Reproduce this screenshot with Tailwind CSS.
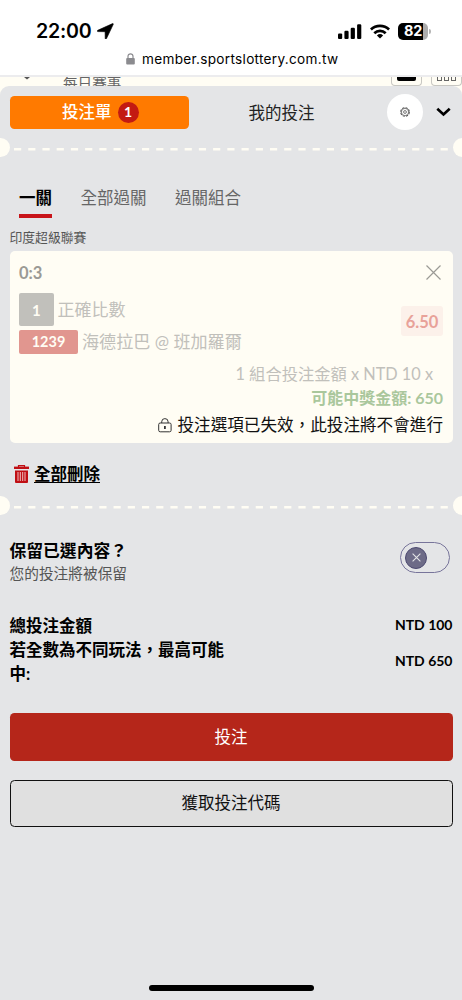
<!DOCTYPE html>
<html lang="zh-TW">
<head>
<meta charset="utf-8">
<meta name="viewport" content="width=device-width, initial-scale=1">
<title>投注單</title>
<script src="https://cdn.jsdelivr.net/npm/@tailwindcss/browser@4"></script>
</head>
<body class="h-[1000px] w-[462px] overflow-hidden bg-[#fffdf4] font-['Lato','Noto_Sans_CJK_TC',sans-serif] text-[16.5px] leading-6 text-[#111]">
<div class="flex h-[1000px] flex-col overflow-hidden">

  <!-- Status bar and address -->
  <header class="flex h-[77px] shrink-0 flex-col border-b-2 border-[#ececee] bg-white font-['Inter','Noto_Sans_CJK_TC',sans-serif] text-black">
    <div class="flex h-[46px] items-end pr-[31px] pl-[36px]">
      <div class="flex h-[30px] items-center gap-[5px]">
        <span class="text-[19.6px] font-semibold tracking-[-0.2px]">22:00</span>
        <svg class="h-4 w-[17px]" viewBox="0 0 17 16"><path d="M15.600.6.7 7.300c-.6.3-.5 1.300.2 1.300l7.200.1.100 6.700c0 .8 1 .9 1.300.2L16.300 1.200c.2-.4-.3-.8-.7-.6Z" fill="#000" stroke="#000" stroke-width=".6"/></svg>
      </div>
      <div class="ml-auto flex h-[30px] items-center gap-[8px]">
        <svg class="h-[15px] w-6" viewBox="0 0 24 15"><rect x="0" y="9.4" width="4.2" height="5.6" rx="1.1"/><rect x="6.4" y="6.8" width="4.2" height="8.2" rx="1.1"/><rect x="12.7" y="3.8" width="4.2" height="11.2" rx="1.1"/><rect x="19.1" y="0.3" width="4.2" height="14.7" rx="1.1"/></svg>
        <svg class="h-[15px] w-5" viewBox="0 0 20 15"><g fill="none" stroke="#000" stroke-width="2.7"><path d="M.9 5.500a13 13 0 0 1 18.200 0"/><path d="M4.300 9.200a8.200 8.200 0 0 1 11.400 0"/></g><path d="M10 14.600 6.900 11.500a4.500 4.500 0 0 1 6.200 0Z"/></svg>
        <div class="flex items-center gap-[1px]">
          <div class="flex h-[17px] w-[30px] items-center justify-center rounded-[5px] bg-linear-to-r from-black from-82% to-[#adadad] to-82% text-[14.5px] font-bold tracking-[-0.2px] text-white">82</div>
          <div class="h-[5px] w-[2px] rounded-r-full bg-[#b5b5b5]"></div>
        </div>
      </div>
    </div>
    <div class="flex h-[25px] items-center gap-[7px] pl-[126px]">
      <svg class="h-3 w-[9px]" viewBox="0 0 9 12"><rect x="0.2" y="5" width="8.600" height="6.600" rx="1" fill="#8b8b8f"/><path d="M2 5.500V3.300a2.500 2.500 0 0 1 5 0v2.200" fill="none" stroke="#8b8b8f" stroke-width="1.200"/></svg>
      <span class="text-[13.6px] tracking-[0.3px]">member.sportslottery.com.tw</span>
    </div>
  </header>

  <!-- Page strip behind the sheet -->
  <div class="flex h-[9px] shrink-0 items-start overflow-hidden pl-[24px]">
    <svg class="h-[3px] w-[6px]" viewBox="0 0 6 3"><path d="M0 0h6L3 2.600Z" fill="#555"/></svg>
    <span class="-mt-[5px] ml-[33px] text-[14.600px] leading-6 text-[#666]">每日賽事</span>
    <div class="mr-[9px] ml-auto flex h-[9px] w-[31px] justify-center rounded-b-[4px] border border-t-0 border-[#c8c7c2]"><div class="h-1 w-[19px] rounded-b-[2px] bg-black"></div></div>
    <div class="flex h-[9px] w-[31px] justify-center gap-[2px] rounded-b-[4px] border border-t-0 border-[#c8c7c2]">
      <i class="h-1 w-[5px] border border-t-0 border-[#666]"></i><i class="h-1 w-[5px] border border-t-0 border-[#666]"></i><i class="h-1 w-[5px] border border-t-0 border-[#666]"></i>
    </div>
  </div>

  <!-- Bet slip sheet -->
  <main class="flex h-[914px] shrink-0 flex-col overflow-hidden rounded-t-[9px] bg-[#e4e5e7]">
    <div class="flex h-[52px] shrink-0 items-center pl-[9.500px]">
      <div class="flex h-[33px] w-[179.500px] items-center justify-center gap-[6px] rounded-[4.500px] bg-[#ff7a00] pl-[2px] font-medium text-white">
        <span>投注單</span>
        <span class="flex size-[21px] items-center justify-center rounded-full bg-[#c31a12] text-[14px] font-bold">1</span>
      </div>
      <span class="ml-[59.500px] pt-px text-[#222]">我的投注</span>
      <div class="ml-[72px] flex size-9 items-center justify-center rounded-full bg-white">
        <svg class="size-[10px]" viewBox="0 0 20 20" fill="none" stroke="#555"><circle cx="10" cy="10" r="8.600" stroke-width="2.200" stroke-dasharray="4.500 2.250"/><circle cx="10" cy="10" r="7.200" stroke-width="1.400"/><circle cx="10" cy="10" r="2.800" stroke-width="1.600"/></svg>
      </div>
      <svg class="ml-[13px] h-[10px] w-[15px]" viewBox="0 0 15 10"><path d="m1.300 1.800 6.200 5.700 6.200-5.700" fill="none" stroke="#000" stroke-width="2.700"/></svg>
    </div>
    <div class="-mx-[9.500px] flex h-[19px] shrink-0 items-center">
      <div class="size-[19px] rounded-full bg-[#fffdf4]"></div>
      <svg class="mx-auto mt-[2px] h-[4px] w-[434px]" viewBox="0 0 434 4"><path d="M0 2.200h434" stroke="#fffdf4" stroke-width="2.600" stroke-dasharray="7.200 7.020"/></svg>
      <div class="size-[19px] rounded-full bg-[#fffdf4]"></div>
    </div>

    <nav class="mt-[29px] flex h-[32px] shrink-0 gap-[28.500px] pl-[19px] text-[#666]">
      <span class="flex flex-col border-b-4 border-[#c8141a] font-bold text-black">一關</span>
      <span>全部過關</span>
      <span>過關組合</span>
    </nav>
    <div class="mt-[7px] h-[26px] shrink-0 pl-[9.500px] text-[12.800px] text-[#555]">印度超級聯賽</div>

    <section class="mx-[9.500px] flex h-[192px] shrink-0 flex-col rounded-[5px] bg-[#fffdf4] px-[9.500px] text-[#c1c0bb]">
      <div class="flex h-[42px] items-center justify-between font-bold text-[#9b9a95]">
        <span class="pt-[2px]">0:3</span>
        <svg class="mr-[2px] h-[15px] w-[15px]" viewBox="0 0 15 15"><path d="m.5.500 14 14m0-14-14 14" stroke="#9b9a95" stroke-width="1.200"/></svg>
      </div>
      <div class="flex h-[61px] items-start justify-between">
        <div class="flex flex-col gap-[4px]">
          <div class="flex items-center gap-[4px]"><span class="flex h-[33px] w-[34.500px] items-center justify-center rounded-[2px] bg-[#c1c0bb] text-[15px] font-bold text-[#fffdf4]">1</span><span class="text-[17px]">正確比數</span></div>
          <div class="flex items-center gap-[4px]"><span class="flex h-[23.500px] w-[59px] items-center justify-center rounded-[2px] bg-[#e1968f] text-[14.500px] font-bold text-[#fffdf4]">1239</span><span class="text-[17.100px]">海德拉巴 @ 班加羅爾</span></div>
        </div>
        <div class="mt-[13px] flex h-[30px] w-[42px] items-center justify-center rounded-[3px] bg-[#fcf1ea] pt-px font-bold text-[#e8a299]">6.50</div>
      </div>
      <div class="mt-[7px] flex flex-col items-end">
        <span class="h-[25px] pr-[10px] text-[16.300px] leading-[25px]">1 組合投注金額 x NTD 10 x</span>
        <span class="h-[25px] text-[16px] leading-[24px] font-bold text-[#aac79c]">可能中獎金額: 650</span>
        <div class="flex h-[28px] items-center gap-[6px] text-[#111]">
          <svg class="h-[15px] w-[14px]" viewBox="0 0 14 15" fill="none" stroke="#333" stroke-width="1"><rect x=".7" y="5" width="12.400" height="8.800" rx="1.500"/><path d="M3.700 5V3.800a3.200 3.200 0 0 1 6.400 0V5"/><path d="M6.900 8v3" stroke-width="1.800"/></svg>
          <span class="text-[16.600px]">投注選項已失效，此投注將不會進行</span>
        </div>
      </div>
    </section>

    <div class="flex h-[53px] shrink-0 items-end pl-[14px]">
      <div class="flex h-[45px] items-center gap-[5px]">
        <svg class="h-[18px] w-[15px]" viewBox="0 0 15 18"><path d="M4.500 2.500V.6h6v1.900" fill="none" stroke="#c00f14" stroke-width="1.200"/><path d="M0 1.600h15v2.400H0Z" fill="#c00f14"/><path d="M1 5.400h13V17a1 1 0 0 1-1 1H2a1 1 0 0 1-1-1Z" fill="#c00f14"/><path d="M4 7v9m2.300-9v9m2.400-9v9M11 7v9" stroke="#f3d5d5" stroke-width=".9"/></svg>
        <span class="font-bold text-black underline decoration-1 underline-offset-2">全部刪除</span>
      </div>
    </div>
    <div class="-mx-[9.500px] flex h-[19px] shrink-0 items-center">
      <div class="size-[19px] rounded-full bg-[#fffdf4]"></div>
      <svg class="mx-auto mt-[2px] h-[4px] w-[434px]" viewBox="0 0 434 4"><path d="M0 2.200h434" stroke="#fffdf4" stroke-width="2.600" stroke-dasharray="7.200 7.020"/></svg>
      <div class="size-[19px] rounded-full bg-[#fffdf4]"></div>
    </div>

    <div class="mt-[24px] flex h-[46px] shrink-0 items-start justify-between pr-[12px] pl-[9.500px]">
      <div class="flex flex-col">
        <span class="h-[23px] text-[16.800px] font-bold text-black">保留已選內容？</span>
        <span class="h-[23px] text-[14.700px] leading-[23px] text-[#555]">您的投注將被保留</span>
      </div>
      <div class="mt-[3px] flex h-[31px] w-[50px] items-center rounded-full border border-[#77749a] pl-[4px]">
        <div class="flex size-[22px] items-center justify-center rounded-full border border-[#4c4970] bg-[#6d6b87]">
          <svg class="size-[9px]" viewBox="0 0 9 9"><path d="m.6.600 7.800 7.800m0-7.800L.6 8.400" stroke="#e4e5e7" stroke-width="1.100"/></svg>
        </div>
      </div>
    </div>

    <div class="mt-[28px] flex h-[24px] shrink-0 items-center justify-between px-[9.500px] font-bold text-black"><span class="pt-px">總投注金額</span><span class="text-[14px]">NTD 100</span></div>
    <div class="flex h-[48px] shrink-0 items-center justify-between px-[9.500px] font-bold text-black"><span class="w-[220px] pt-px">若全數為不同玩法，最高可能中:</span><span class="text-[14px]">NTD 650</span></div>

    <div class="mt-[28px] flex shrink-0 flex-col gap-[19px] px-[9.500px]">
      <div class="flex h-[47.500px] items-center justify-center rounded-[4.500px] bg-[#b5261a] text-white">投注</div>
      <div class="flex h-[47.500px] items-center justify-center rounded-[4.500px] border border-[#111] bg-[#e0e0e0]">獲取投注代碼</div>
    </div>
    <div class="mx-auto mt-auto mb-[9.500px] h-[6px] w-[165px] shrink-0 rounded-full bg-black"></div>
  </main>
</div>
</body>
</html>
